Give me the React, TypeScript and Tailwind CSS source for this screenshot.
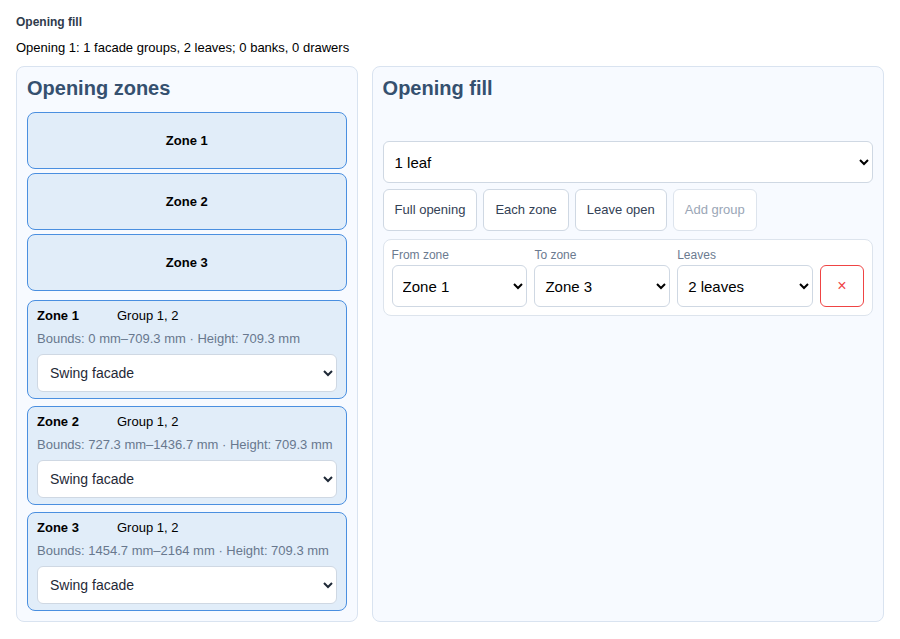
import { useState } from 'react'

type Zone = { name: string; bounds: string }

const ZONES: Zone[] = [
  { name: 'Zone 1', bounds: 'Bounds: 0 mm–709.3 mm · Height: 709.3 mm' },
  { name: 'Zone 2', bounds: 'Bounds: 727.3 mm–1436.7 mm · Height: 709.3 mm' },
  { name: 'Zone 3', bounds: 'Bounds: 1454.7 mm–2164 mm · Height: 709.3 mm' },
]

const FONT = { fontFamily: '"Liberation Sans", Arial, sans-serif' }

function ZoneCard({ zone }: { zone: Zone }) {
  const [fill, setFill] = useState('swing')
  return (
    <div className="rounded-lg border border-[#4a8fe0] bg-[#e1edf9] px-[9px] pt-[7px] pb-[6px]">
      <div className="flex text-[13px] leading-[16px] text-black">
        <span className="w-[80px] font-bold">{zone.name}</span>
        <span>Group 1, 2</span>
      </div>
      <div className="mt-[7px] text-[13px] leading-[16px] text-[#68788e]">{zone.bounds}</div>
      <select
        value={fill}
        onChange={(e) => setFill(e.target.value)}
        className="mt-[7px] h-[38px] w-full rounded-md border border-[#cfd8e3] bg-white pl-[8px] pr-1 text-[14px] text-[#1f2937]"
      >
        <option value="swing">Swing facade</option>
        <option value="none">None</option>
      </select>
    </div>
  )
}

function FieldSelect({ label, options, value }: { label: string; options: string[]; value: string }) {
  const [v, setV] = useState(value)
  return (
    <label className="flex flex-col gap-[3px]">
      <span className="text-[12px] leading-[14px] text-[#6b7a8f]">{label}</span>
      <select
        value={v}
        onChange={(e) => setV(e.target.value)}
        className="h-[42px] w-full rounded-md border border-[#cfd8e3] bg-white pl-[6px] pr-1 text-[15px] text-black"
      >
        {options.map((o) => (
          <option key={o}>{o}</option>
        ))}
      </select>
    </label>
  )
}

export default function App() {
  const [leafMode, setLeafMode] = useState('1 leaf')
  const zoneNames = ZONES.map((z) => z.name)

  return (
    <div className="min-h-screen bg-white px-4 pt-[14px]" style={FONT}>
      <h3 className="text-[12px] leading-[16px] font-bold text-[#2f3b4c]">Opening fill</h3>
      <p className="mt-[10px] text-[13px] leading-[16px] text-black">
        Opening 1: 1 facade groups, 2 leaves; 0 banks, 0 drawers
      </p>

      <div className="mt-[10px] grid h-[556px] grid-cols-[2fr_3fr] gap-[14px]">
        <section className="rounded-lg border border-[#d9e3f0] bg-[#f7faff] p-[10px]">
          <h2 className="text-[20px] leading-[23px] font-bold text-[#35506f]">Opening zones</h2>
          <div className="mt-[12px] flex flex-col gap-1">
            {ZONES.map((z) => (
              <button
                key={z.name}
                type="button"
                className="h-[57px] rounded-lg border border-[#4a8fe0] bg-[#e1edf9] text-[13px] font-bold text-black"
              >
                {z.name}
              </button>
            ))}
          </div>
          <div className="mt-[9px] flex flex-col gap-[7px]">
            {ZONES.map((z) => (
              <ZoneCard key={z.name} zone={z} />
            ))}
          </div>
        </section>

        <section className="rounded-lg border border-[#d9e3f0] bg-[#f7faff] p-[10px]">
          <h2 className="text-[20px] leading-[23px] font-bold text-[#35506f]">Opening fill</h2>
          <select
            value={leafMode}
            onChange={(e) => setLeafMode(e.target.value)}
            className="mt-[41px] h-[42px] w-full rounded-md border border-[#cfd8e3] bg-white pl-[7px] pr-1 text-[15px] text-black"
          >
            <option>1 leaf</option>
            <option>2 leaves</option>
          </select>

          <div className="mt-[6px] flex gap-[6px]">
            {['Full opening', 'Each zone', 'Leave open'].map((b) => (
              <button
                key={b}
                type="button"
                className="h-[42px] rounded-md border border-[#cfd8e3] bg-white px-[11px] text-[13px] text-[#334155]"
              >
                {b}
              </button>
            ))}
            <button
              type="button"
              disabled
              className="h-[42px] rounded-md border border-[#dde4ed] bg-white px-[11px] text-[13px] text-[#9aa6b6]"
            >
              Add group
            </button>
          </div>

          <div className="mt-[8px] grid grid-cols-[1fr_1fr_1fr_44px] items-end gap-[7px] rounded-lg border border-[#dde4ed] bg-white p-[8px]">
            <FieldSelect label="From zone" options={zoneNames} value="Zone 1" />
            <FieldSelect label="To zone" options={zoneNames} value="Zone 3" />
            <FieldSelect label="Leaves" options={['1 leaf', '2 leaves']} value="2 leaves" />
            <button
              type="button"
              aria-label="Remove group"
              className="flex h-[42px] items-center justify-center rounded-md border border-[#ef4444] bg-white text-[16px] text-[#ef4444]"
            >
              ×
            </button>
          </div>
        </section>
      </div>
    </div>
  )
}
